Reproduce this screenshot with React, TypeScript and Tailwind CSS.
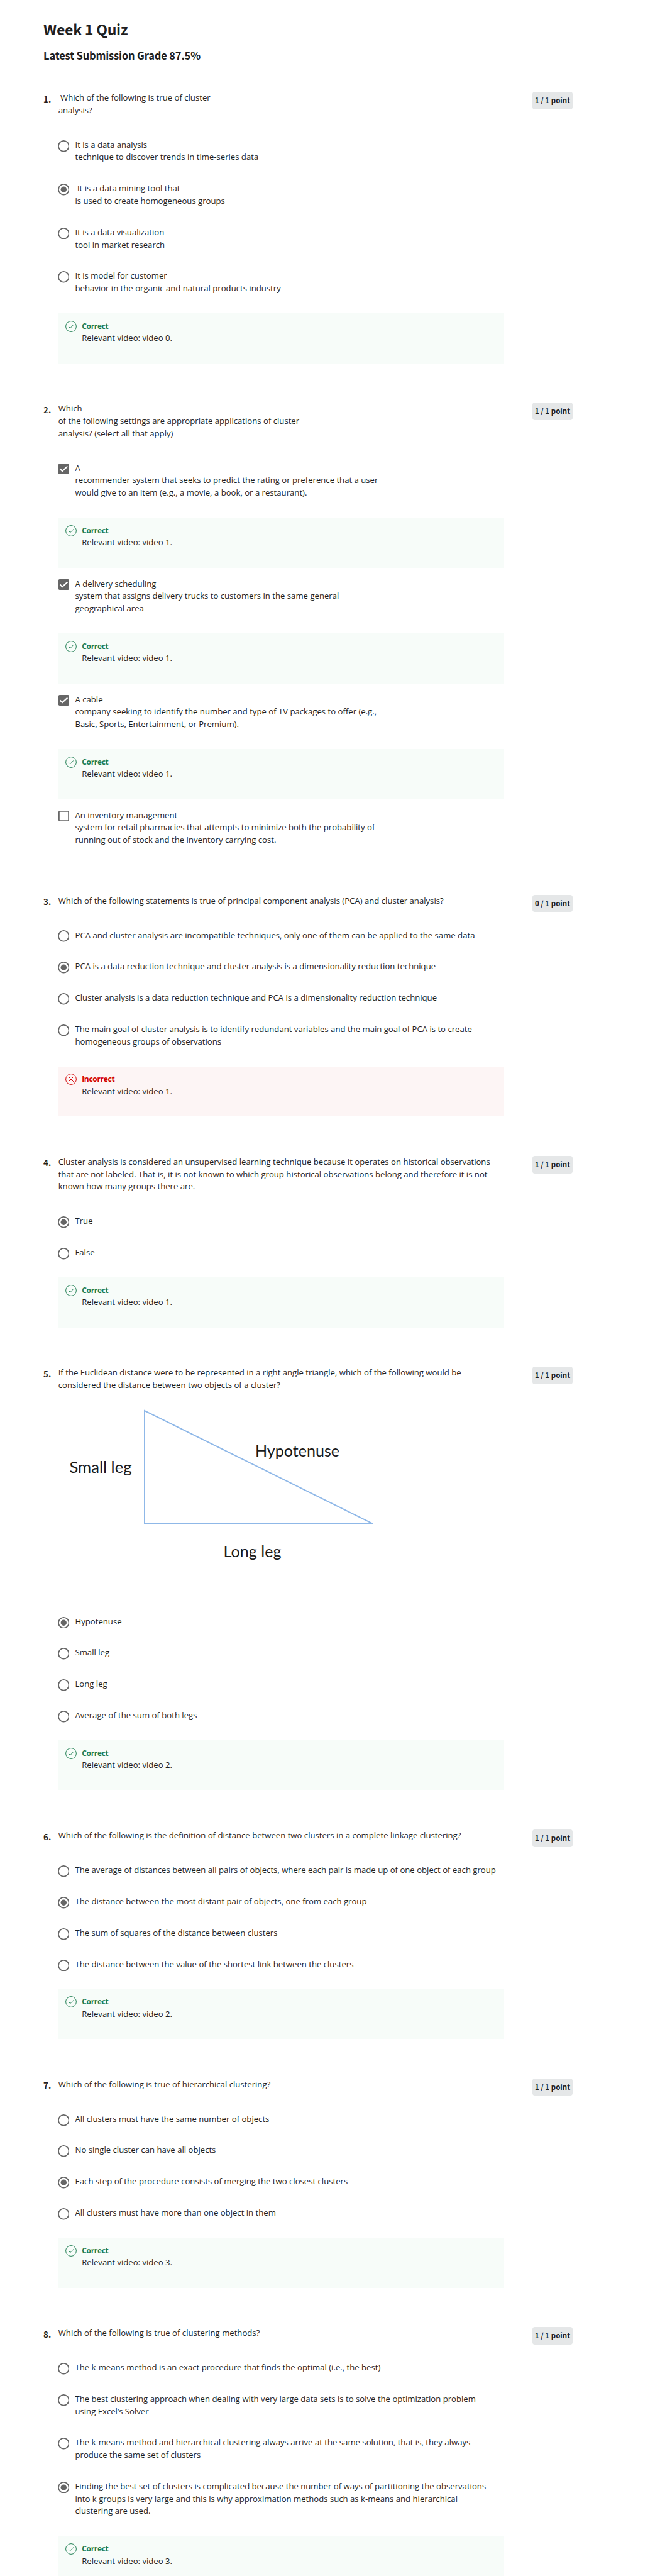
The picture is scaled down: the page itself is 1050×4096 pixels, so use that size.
import React from "react";

type Option = { lines: string[]; checked?: boolean; feedback?: string };
type Question = {
  lines: string[];
  score: string;
  kind?: "checkbox";
  diagram?: boolean;
  options: Option[];
  feedback?: string;
  wrong?: boolean;
};

const questions: Question[] = [
  {
    lines: ["\u00a0Which of the following is true of cluster", "analysis?"],
    score: "1 / 1 point",
    options: [
      { lines: ["It is a data analysis", "technique to discover trends in time-series data"] },
      { lines: ["\u00a0It is a data mining tool that", "is used to create homogeneous groups"], checked: true },
      { lines: ["It is a data visualization", "tool in market research"] },
      { lines: ["It is model for customer", "behavior in the organic and natural products industry"] },
    ],
    feedback: "Relevant video: video 0.",
  },
  {
    lines: ["Which", "of the following settings are appropriate applications of cluster", "analysis? (select all that apply)"],
    score: "1 / 1 point",
    kind: "checkbox",
    options: [
      {
        lines: ["A", "recommender system that seeks to predict the rating or preference that a user", "would give to an item (e.g., a movie, a book, or a restaurant)."],
        checked: true,
        feedback: "Relevant video: video 1.",
      },
      {
        lines: ["A delivery scheduling", "system that assigns delivery trucks to customers in the same general", "geographical area"],
        checked: true,
        feedback: "Relevant video: video 1.",
      },
      {
        lines: ["A cable", "company seeking to identify the number and type of TV packages to offer (e.g.,", "Basic, Sports, Entertainment, or Premium)."],
        checked: true,
        feedback: "Relevant video: video 1.",
      },
      {
        lines: ["An inventory management", "system for retail pharmacies that attempts to minimize both the probability of", "running out of stock and the inventory carrying cost."],
      },
    ],
  },
  {
    lines: ["Which of the following statements is true of principal component analysis (PCA) and cluster analysis?"],
    score: "0 / 1 point",
    options: [
      { lines: ["PCA and cluster analysis are incompatible techniques, only one of them can be applied to the same data"] },
      { lines: ["PCA is a data reduction technique and cluster analysis is a dimensionality reduction technique"], checked: true },
      { lines: ["Cluster analysis is a data reduction technique and PCA is a dimensionality reduction technique"] },
      { lines: ["The main goal of cluster analysis is to identify redundant variables and the main goal of PCA is to create", "homogeneous groups of observations"] },
    ],
    feedback: "Relevant video: video 1.",
    wrong: true,
  },
  {
    lines: [
      "Cluster analysis is considered an unsupervised learning technique because it operates on historical observations",
      "that are not labeled. That is, it is not known to which group historical observations belong and therefore it is not",
      "known how many groups there are.",
    ],
    score: "1 / 1 point",
    options: [{ lines: ["True"], checked: true }, { lines: ["False"] }],
    feedback: "Relevant video: video 1.",
  },
  {
    lines: [
      "If the Euclidean distance were to be represented in a right angle triangle, which of the following would be",
      "considered the distance between two objects of a cluster?",
    ],
    score: "1 / 1 point",
    diagram: true,
    options: [
      { lines: ["Hypotenuse"], checked: true },
      { lines: ["Small leg"] },
      { lines: ["Long leg"] },
      { lines: ["Average of the sum of both legs"] },
    ],
    feedback: "Relevant video: video 2.",
  },
  {
    lines: ["Which of the following is the definition of distance between two clusters in a complete linkage clustering?"],
    score: "1 / 1 point",
    options: [
      { lines: ["The average of distances between all pairs of objects, where each pair is made up of one object of each group"] },
      { lines: ["The distance between the most distant pair of objects, one from each group"], checked: true },
      { lines: ["The sum of squares of the distance between clusters"] },
      { lines: ["The distance between the value of the shortest link between the clusters"] },
    ],
    feedback: "Relevant video: video 2.",
  },
  {
    lines: ["Which of the following is true of hierarchical clustering?"],
    score: "1 / 1 point",
    options: [
      { lines: ["All clusters must have the same number of objects"] },
      { lines: ["No single cluster can have all objects"] },
      { lines: ["Each step of the procedure consists of merging the two closest clusters"], checked: true },
      { lines: ["All clusters must have more than one object in them"] },
    ],
    feedback: "Relevant video: video 3.",
  },
  {
    lines: ["Which of the following is true of clustering methods?"],
    score: "1 / 1 point",
    options: [
      { lines: ["The k-means method is an exact procedure that finds the optimal (i.e., the best)"] },
      { lines: ["The best clustering approach when dealing with very large data sets is to solve the optimization problem", "using Excel’s Solver"] },
      { lines: ["The k-means method and hierarchical clustering always arrive at the same solution, that is, they always", "produce the same set of clusters"] },
      {
        lines: [
          "Finding the best set of clusters is complicated because the number of ways of partitioning the observations",
          "into k groups is very large and this is why approximation methods such as k-means and hierarchical",
          "clustering are used.",
        ],
        checked: true,
      },
    ],
    feedback: "Relevant video: video 3.",
  },
];

function Lines({ lines }: { lines: string[] }) {
  return (
    <>
      {lines.map((line) => (
        <span key={line} className="block whitespace-nowrap">
          {line}
        </span>
      ))}
    </>
  );
}

function Radio({ checked }: { checked?: boolean }) {
  return (
    <svg viewBox="0 0 18.6 18.6" className="-ml-[1px] size-[18.6px] shrink-0">
      <circle cx="9.3" cy="9.3" r="8.35" fill="none" stroke="#666" strokeWidth="1.8" />
      {checked && <circle cx="9.3" cy="9.3" r="4.7" fill="#666" />}
    </svg>
  );
}

function Checkbox({ checked }: { checked?: boolean }) {
  return (
    <svg viewBox="0 0 17 17" className="size-[17px] shrink-0" fill="none">
      {checked ? (
        <>
          <rect width="17" height="17" rx="1.8" fill="#666" />
          <path d="M2.5 8.5 6.1 12 14.4 4.4" stroke="white" strokeWidth="2.1" />
        </>
      ) : (
        <rect x="0.9" y="0.9" width="15.2" height="15.2" rx="1" stroke="#666" strokeWidth="1.8" />
      )}
    </svg>
  );
}

function Feedback({ text, wrong }: { text: string; wrong?: boolean }) {
  return (
    <div className={`flex h-[79.3px] w-[709.6px] pt-[10.3px] pl-[11.2px] ${wrong ? "bg-[#fdf5f5]" : "bg-[#f7fcf9]"}`}>
      <svg
        viewBox="0 0 24 24"
        className={`mt-[1px] size-[18px] shrink-0 ${wrong ? "text-[#d30001]" : "text-[#1d7c50]"}`}
        fill="none"
        stroke="currentColor"
        strokeWidth="1.3"
      >
        <circle cx="12" cy="12" r="11.2" />
        {wrong ? <path d="M6.8 6.8 17.2 17.2 M17.2 6.8 6.8 17.2" /> : <path d="M6.9 12.3 10.3 15.8 17.1 8.5" />}
      </svg>
      <div className="ml-[8.3px]">
        <p
          className={`h-[19.72px] text-[12px] leading-[19.72px] font-bold tracking-[-0.3px] ${
            wrong ? "text-[#d30001]" : "text-[#1d7c50]"
          }`}
        >
          {wrong ? "Incorrect" : "Correct"}
        </p>
        <p>{text}</p>
      </div>
    </div>
  );
}

function TriangleDiagram() {
  return (
    <svg
      viewBox="0 0 520 356"
      className="block h-[356px] w-[520px]"
      fontFamily='Lato, "Open Sans", sans-serif'
      fontSize="25"
      fill="#1a1a1a"
    >
      <path d="M137 30V209.6H499.8Z" fill="none" stroke="#8fb8e8" strokeWidth="2" />
      <text x="17.5" y="129.2" textLength="99" lengthAdjust="spacingAndGlyphs">Small leg</text>
      <text x="313" y="102.7" textLength="134" lengthAdjust="spacingAndGlyphs">Hypotenuse</text>
      <text x="262.5" y="262.7" textLength="92" lengthAdjust="spacingAndGlyphs">Long leg</text>
    </svg>
  );
}

function QuestionBlock({ q, index }: { q: Question; index: number }) {
  const isCheckbox = q.kind === "checkbox";
  const gapAfter = (o: Option, i: number) => {
    if (o.feedback) return "mb-[16px]";
    if (i < q.options.length - 1) return "mb-[30.1px]";
    return q.feedback ? "mb-[29.6px]" : "";
  };
  return (
    <section className={`flex items-start ${q.feedback ? "mb-[62.7px]" : "mb-[77px]"}`}>
      <span className="mt-[1.5px] w-[23.6px] shrink-0 font-['Noto_Sans_CJK_SC'] text-[13.2px] font-bold">{index + 1}.</span>
      <div className="w-[754.3px] shrink-0">
        <div className={q.diagram ? "" : "mb-[35px]"}>
          <Lines lines={q.lines} />
        </div>
        {q.diagram && <TriangleDiagram />}
        <ul className="flex flex-col">
          {q.options.map((o, i) => (
            <li key={i} className={gapAfter(o, i)}>
              <div className="flex">
                <span className="flex h-[19.72px] w-[26.8px] shrink-0 items-center pt-[2.8px]">
                  {isCheckbox ? <Checkbox checked={o.checked} /> : <Radio checked={o.checked} />}
                </span>
                <div>
                  <Lines lines={o.lines} />
                </div>
              </div>
              {o.feedback && (
                <div className="mt-[29.6px]">
                  <Feedback text={o.feedback} />
                </div>
              )}
            </li>
          ))}
        </ul>
        {q.feedback && <Feedback text={q.feedback} wrong={q.wrong} />}
      </div>
      <span className="flex h-[27.6px] w-[64px] shrink-0 items-center justify-center rounded-[4px] bg-[#e5e7e8] font-['Noto_Sans_CJK_SC'] text-[11.5px] font-bold whitespace-nowrap">
        {q.score}
      </span>
    </section>
  );
}

export default function App() {
  return (
    <main className="flex h-[4096px] w-[1050px] flex-col overflow-hidden bg-white pl-[69.1px] font-['Open_Sans',sans-serif] text-[13.15px] leading-[19.72px] text-[#1f1f1f]">
      <h1 className="mt-[29.5px] h-[32px] shrink-0 font-['Noto_Sans_CJK_SC'] text-[23.2px] leading-[32px] font-bold tracking-[-0.33px]">
        Week 1 Quiz
      </h1>
      <h2 className="mt-[14.8px] mb-[46px] h-[24px] shrink-0 font-['Noto_Sans_CJK_SC'] text-[16.5px] leading-[24px] font-bold tracking-[-0.17px]">
        Latest Submission Grade 87.5%
      </h2>
      {questions.map((q, i) => (
        <QuestionBlock key={i} q={q} index={i} />
      ))}
    </main>
  );
}
